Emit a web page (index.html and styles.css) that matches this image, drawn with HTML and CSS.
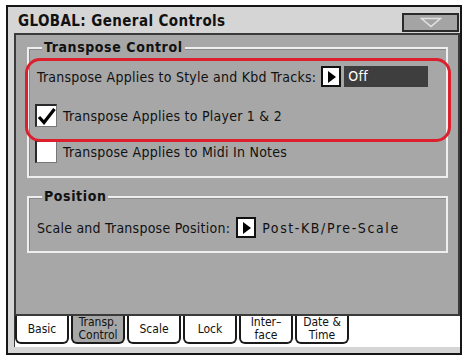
FILE: index.html
```html
<!DOCTYPE html>
<html>
<head>
<meta charset="utf-8">
<link rel="stylesheet" href="styles.css">
</head>
<body>
<div class="screen">
  <div class="titlebar">
    <div class="title">GLOBAL: General Controls</div>
    <div class="menu-btn">
      <svg width="22" height="11" viewBox="0 0 22 11"><path d="M1.5 1.5 H20.5 L11 9.5 Z" fill="none" stroke="#e2e2e2" stroke-width="1.6"/></svg>
    </div>
  </div>
  <div class="panel">
    <div class="group group-transpose">
      <div class="group-title">Transpose Control</div>
      <div class="row row-param">
        <span class="label">Transpose Applies to Style and Kbd Tracks:</span>
        <span class="arrow-box"><svg width="8" height="12" viewBox="0 0 8 12"><path d="M0 0 L8 6 L0 12 Z" fill="#000"/></svg></span>
        <span class="value-box">Off</span>
      </div>
      <div class="row row-check">
        <span class="checkbox"><svg width="19" height="19" viewBox="0 0 19 19"><path d="M2 10 L7 15.5 L17.5 2" fill="none" stroke="#000" stroke-width="3.2"/></svg></span>
        <span class="label">Transpose Applies to Player 1 &amp; 2</span>
      </div>
      <div class="row row-check row-check2">
        <span class="checkbox"></span>
        <span class="label">Transpose Applies to Midi In Notes</span>
      </div>
      <div class="highlight"></div>
    </div>
    <div class="group group-position">
      <div class="group-title">Position</div>
      <div class="row row-param row-pos">
        <span class="label">Scale and Transpose Position:</span>
        <span class="arrow-box"><svg width="8" height="12" viewBox="0 0 8 12"><path d="M0 0 L8 6 L0 12 Z" fill="#000"/></svg></span>
        <span class="value-text">Post-KB/Pre-Scale</span>
      </div>
    </div>
  </div>
  <div class="tabbar">
    <div class="tab"><span>Basic</span></div>
    <div class="tab tab-active"><span>Transp.<br>Control</span></div>
    <div class="tab"><span>Scale</span></div>
    <div class="tab"><span>Lock</span></div>
    <div class="tab"><span>Inter–<br>face</span></div>
    <div class="tab"><span>Date &amp;<br>Time</span></div>
  </div>
</div>
</body>
</html>
```
FILE: styles.css
```css
html, body {
  margin: 0;
  padding: 0;
  background: #ffffff;
}
body {
  font-family: "DejaVu Sans Condensed", "DejaVu Sans", sans-serif;
  color: #111;
}
.screen {
  box-sizing: border-box;
  margin: 5px 0 0 6px;
  width: 456px;
  height: 350px;
  border: 2px solid #161616;
  background: #d5d5d5;
  padding: 0 0 0 6px;
  display: flex;
  flex-direction: column;
}
.titlebar {
  height: 26px;
  display: flex;
  align-items: center;
  justify-content: space-between;
  padding: 0 1px 0 4px;
  box-sizing: border-box;
}
.title {
  font-weight: bold;
  font-size: 15px;
  letter-spacing: 0.4px;
  margin-top: 2px;
}
.menu-btn {
  box-sizing: border-box;
  width: 57px;
  height: 19px;
  margin-top: 4px;
  border: 2px solid #2a2a2a;
  background: #a4a4a4;
  display: flex;
  align-items: center;
  justify-content: center;
}
.panel {
  box-sizing: border-box;
  height: 283px;
  border: 2px solid #3a3a3a;
  background: #a7a7a7;
  padding: 12px 10px 0 11px;
}
.group {
  position: relative;
  box-sizing: border-box;
  border: 2px solid #eeeeee;
  box-shadow: inset 1px 1px 0 #8a8a8a;
  padding: 0 6px;
}
.group-transpose {
  height: 131px;
}
.group-position {
  margin-top: 18px;
  height: 57px;
}
.group-title {
  display: block;
  width: max-content;
  font-weight: bold;
  font-size: 14px;
  line-height: 16px;
  letter-spacing: 0.6px;
  margin: -10px 0 0 7px;
  padding: 0 2px;
  background: #a7a7a7;
}
.row {
  display: flex;
  align-items: center;
  font-size: 14px;
  letter-spacing: 0.25px;
}
.label {
  white-space: nowrap;
}
.row-param {
  margin-top: 11px;
  height: 21px;
  padding-left: 2px;
}
.row-pos {
  margin-top: 13px;
}
.row-pos .arrow-box {
  margin-left: 6px;
}
.arrow-box {
  box-sizing: border-box;
  width: 20px;
  height: 21px;
  margin-left: 5px;
  border: 2px solid #111;
  background: #fff;
  display: flex;
  align-items: center;
  justify-content: center;
  padding-left: 1px;
}
.value-box {
  box-sizing: border-box;
  width: 84px;
  height: 21px;
  margin-left: 3px;
  background: #3e3e3e;
  color: #fff;
  padding-left: 4px;
  line-height: 21px;
}
.value-text {
  margin-left: 6px;
  letter-spacing: 1.6px;
}
.row-check {
  margin-top: 17px;
  height: 23px;
}
.row-check2 {
  margin-top: 13px;
}
.checkbox {
  box-sizing: border-box;
  width: 22px;
  height: 23px;
  margin-right: 6px;
  background: #fff;
  border-top: 2px solid #2a2a2a;
  border-left: 2px solid #2a2a2a;
  border-right: 1px solid #777;
  border-bottom: 1px solid #777;
  display: flex;
  align-items: center;
  justify-content: center;
}
.highlight {
  position: absolute;
  left: -4px;
  right: -5px;
  top: 9px;
  height: 78px;
  border: 3px solid #dc1f2d;
  border-radius: 15px;
  pointer-events: none;
}
.tabbar {
  height: 31px;
  background: #fff;
  border-left: 1px solid #3a3a3a;
  display: flex;
  align-items: flex-start;
  gap: 2px;
}
.tab {
  box-sizing: border-box;
  width: 54px;
  height: 28px;
  border: 2px solid #1a1a1a;
  border-top: none;
  border-radius: 0 0 6px 6px;
  background: #fff;
  font-size: 12px;
  line-height: 13px;
  text-align: center;
  display: flex;
  align-items: center;
  justify-content: center;
}
.tab-active {
  background: #a7a7a7;
  align-items: flex-start;
}
```
